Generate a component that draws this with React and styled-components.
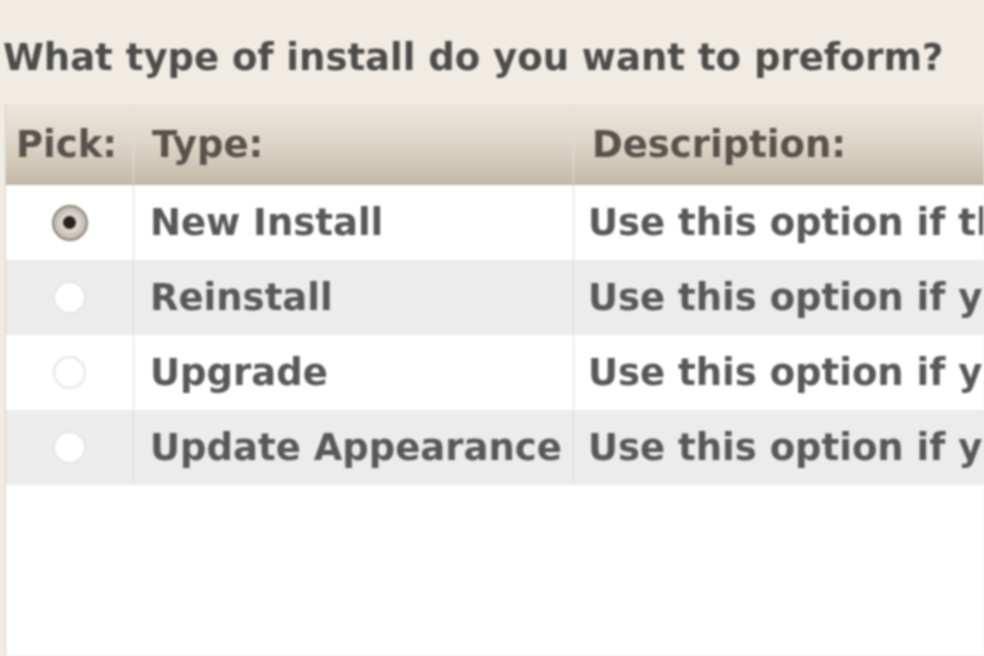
import React from 'react';
import styled, { createGlobalStyle } from 'styled-components';

const GlobalStyle = createGlobalStyle`
  html, body {
    margin: 0;
    padding: 0;
    background: #f0ece4;
    overflow: hidden;
  }
`;

const Window = styled.div`
  width: 984px;
  height: 656px;
  display: flex;
  flex-direction: column;
  background: #f0ece4;
  font-family: "DejaVu Sans", "Liberation Sans", sans-serif;
  font-weight: bold;
  color: #4e4e4e;
  filter: blur(1.2px);
`;

const Question = styled.div`
  font-size: 37px;
  height: 104px;
  padding-left: 3px;
  line-height: 116px;
  box-sizing: border-box;
  white-space: nowrap;
  color: #4c4c4a;
`;

const Table = styled.div`
  flex: 1;
  margin-left: 5px;
  background: #ffffff;
  border-left: 1px solid #d8d2c6;
  display: flex;
  flex-direction: column;
`;

const HeaderRow = styled.div`
  display: grid;
  grid-template-columns: 128px 440px 1fr;
  height: 81px;
  background: linear-gradient(#ebe6dd, #ddd5c8 50%, #c4b9a7);
  border-bottom: 1px solid #bdb2a0;
  box-sizing: border-box;
`;

const HeaderCell = styled.div`
  display: flex;
  align-items: center;
  padding-left: ${p => p.pad ?? 18}px;
  font-size: 37px;
  color: #57524b;
  border-right: 1px solid ${p => (p.last ? 'transparent' : '#e4ddd2')};
  white-space: nowrap;
  overflow: hidden;
`;

const Row = styled.div`
  display: grid;
  grid-template-columns: 128px 440px 1fr;
  height: 75px;
  background: ${p => (p.alt ? '#ececec' : '#ffffff')};
`;

const Cell = styled.div`
  display: flex;
  align-items: center;
  padding-left: ${p => p.pad ?? 16}px;
  font-size: 37px;
  color: #585858;
  border-right: 1px solid ${p => (p.last ? 'transparent' : '#dadde0')};
  white-space: nowrap;
  overflow: hidden;
  justify-content: ${p => (p.center ? 'center' : 'flex-start')};
`;

const Radio = styled.span`
  width: ${p => (p.checked ? 36 : 33)}px;
  height: ${p => (p.checked ? 36 : 33)}px;
  border-radius: 50%;
  box-sizing: border-box;
  display: flex;
  align-items: center;
  justify-content: center;
  background: ${p => (p.checked ? 'radial-gradient(circle, #dcd8d0 35%, #a59d91 100%)' : '#ffffff')};
  border: 2px solid ${p => (p.checked ? '#8c8478' : '#e4e4e4')};

  &::after {
    content: '';
    width: 13px;
    height: 13px;
    border-radius: 50%;
    background: ${p => (p.checked ? '#26221e' : 'transparent')};
  }
`;

const options = [
  { type: 'New Install', desc: 'Use this option if this is a new install', checked: true },
  { type: 'Reinstall', desc: 'Use this option if you want to reinstall' },
  { type: 'Upgrade', desc: 'Use this option if you want to upgrade' },
  { type: 'Update Appearance', desc: 'Use this option if you want to update' },
];

export default function App() {
  return (
    <>
      <GlobalStyle />
      <Window>
        <Question>What type of install do you want to preform?</Question>
        <Table>
          <HeaderRow>
            <HeaderCell pad={10}>Pick:</HeaderCell>
            <HeaderCell>Type:</HeaderCell>
            <HeaderCell last>Description:</HeaderCell>
          </HeaderRow>
          {options.map((o, i) => (
            <Row key={o.type} alt={i % 2 === 1}>
              <Cell center pad={0}>
                <Radio checked={o.checked} />
              </Cell>
              <Cell>{o.type}</Cell>
              <Cell last pad={14}>{o.desc}</Cell>
            </Row>
          ))}
        </Table>
      </Window>
    </>
  );
}
